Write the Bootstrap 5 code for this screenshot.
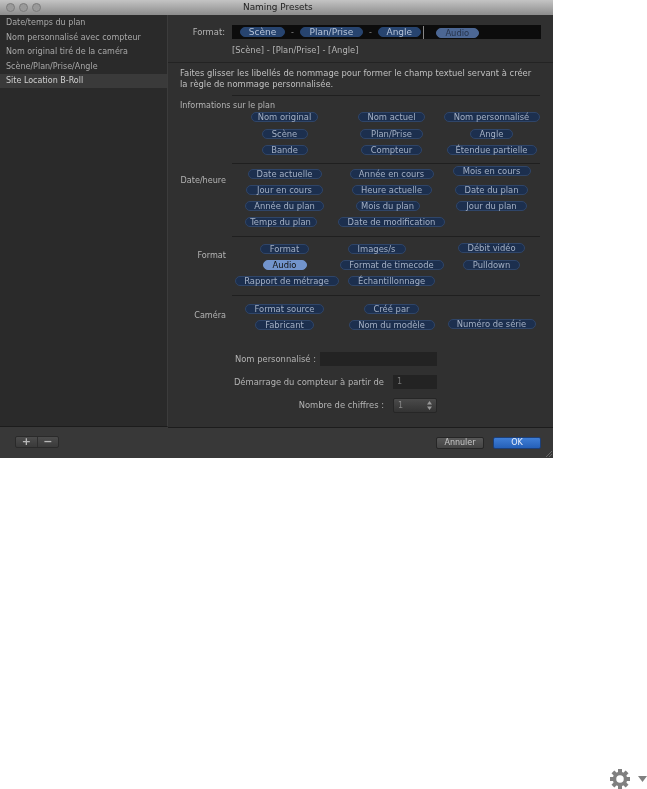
<!DOCTYPE html>
<html lang="fr">
<head>
<meta charset="utf-8">
<title>Naming Presets</title>
<link rel="stylesheet" href="https://cdn.jsdelivr.net/npm/bootstrap@5.3.0/dist/css/bootstrap.min.css">
<style>
html,body{height:100%}
body{background:#fff;font-family:"DejaVu Sans","Liberation Sans",sans-serif;font-size:8px;line-height:11px;color:#b4b4b4;overflow:hidden}
.np-window{width:553px;height:458px;background:#383838;flex:none;filter:blur(.3px)}
.np-title{height:15px;background:linear-gradient(#c4c4c4,#8c8c8c);color:#222;font-size:8.9px;line-height:15px;padding-left:6px}
.np-light{width:9px;height:9px;border-radius:50%;background:#9a9a9a;border:1px solid #7b7b7b}
.np-titletext{margin-left:198px}
.np-body{height:413px}
.np-side{width:168px;background:#2a2a2a;border-right:1px solid #3c3c3c;padding-top:1px;height:412px;border-bottom:1px solid #1c1c1c}
.np-side .list-group-item{background:transparent;border:0;border-radius:0;color:#a8a8a8;font-size:8px;line-height:14.7px;height:14.7px;padding:0 0 0 6px}
.np-side .list-group-item.active{background:#3a3a3a;color:#d0d0d0}
.np-main{width:385px;background:#303030;height:413px;border-bottom:1px solid #1c1c1c}
.np-head{height:48px;border-bottom:1px solid #232323;padding-top:10px}
.np-flabel{width:57px;text-align:right;line-height:14px;font-size:8.4px}
.np-field{width:309px;height:14px;background:#0c0c0c;margin-left:7px;padding-left:8px;align-items:center;gap:6px;color:#8a8a8a}
.np-caret{width:1px;height:13px;background:#888;margin-left:-4px}
.np-chip{display:inline-block;height:10px;line-height:8.500px;border-radius:5px;background:#1c2f4e;border:1px solid #2f4568;color:#a4b0c4;white-space:nowrap;justify-self:center;text-align:center;font-size:8.4px}
.np-field .np-chip{background:#27446f;color:#b6c4da;border-color:#27446f;font-size:9px}
.np-field .np-ghost{background:#4c6794;border-color:#4c6794;color:#26334a;margin:2px 0 0 6px;font-size:8.4px}
.np-chip.np-on{background:#7294cc;border-color:#7294cc;color:#101010}
.np-preview{margin:6px 0 0 64px;line-height:11px;font-size:8.4px}
.np-para{padding:5px 0 0 12px;line-height:11px;height:32px;color:#c0c0c0;font-size:8.4px}
.np-rule{height:1px;background:#1f1f1f;margin-left:64px;width:308px}
.np-infolabel{margin:5px 0 0 12px;line-height:10px;height:10px}
.np-grid{display:grid;grid-template-columns:107px 107px 93px;grid-auto-rows:16px;align-items:start;margin-left:63px}
.np-sec{display:flex}
.np-seclabel{width:58px;text-align:right;margin:6px 6px 0 0;line-height:10px;flex:none;font-size:8.1px}
.np-sec .np-grid{margin-left:-1px}
.d1{margin-top:1px}.u1{margin-top:-1px}.u3{margin-top:-3px}
.ml4{margin-right:8px}.ml30{margin-right:30px}.mr3{margin-left:4px}
.gap-a{margin-top:1px}.gap-b{margin-top:3px}.gap-c{margin-top:5px}.gap-d{margin-top:3px}.gap-e{margin-top:7px}.gap-f{margin-top:3px}.gap-g{margin-top:8px}
.cw43{width:43px}.cw44{width:44px}.cw45{width:45px}.cw46{width:46px}.cw49{width:49px}.cw55{width:55px}.cw57{width:57px}.cw58{width:58px}.cw59{width:59px}.cw61{width:61px}.cw63{width:63px}.cw64{width:64px}.cw67{width:67px}.cw71{width:71px}.cw72{width:72px}.cw73{width:73px}.cw74{width:74px}.cw77{width:77px}.cw78{width:78px}.cw79{width:79px}.cw80{width:80px}.cw84{width:84px}.cw86{width:86px}.cw87{width:87px}.cw88{width:88px}.cw90{width:90px}.cw96{width:96px}.cw104{width:104px}.cw107{width:107px}
.np-fields{margin-top:16px}
.np-frow{height:14px;margin-bottom:9px;align-items:center}
.np-frow label{width:148px;text-align:right;margin:0;flex:none;white-space:nowrap;font-size:8.4px}
.np-input{background:#232323;border:0;border-radius:0;height:14px;padding:0 0 0 4px;font-size:8px;color:#777;min-height:0;line-height:14px}
.np-input:focus{background:#232323;box-shadow:none;color:#777}
.np-w1{width:117px;margin-left:4px}
.np-w2{width:44px;margin-left:9px}
.np-frow .np-lw2{width:216px}
.np-stepper{width:44px;height:15px;margin-left:9px;background:linear-gradient(#4a4a4a,#333);border:1px solid #262626;border-radius:2px;padding:0 4px;color:#888;line-height:13px}
.np-foot{height:30px;padding:8px 12px 0 15px;position:relative}
.np-seg{width:44px;height:12px;background:linear-gradient(#4c4c4c,#3a3a3a);border:1px solid #2a2a2a;border-radius:2px}
.np-seg span{flex:1;text-align:center;color:#b8b8b8;font-size:11px;line-height:10px;font-weight:700}
.np-seg span+span{border-left:1px solid #2e2e2e}
.np-btn{height:12px;width:48px;padding:0;font-size:8px;line-height:10px;border-radius:2px;margin-top:1px}
.np-cancel{background:linear-gradient(#585858,#444);border:1px solid #262626;color:#c8c8c8}
.np-ok{background:linear-gradient(#3f7ed6,#2560b8);border:1px solid #1c3f78;color:#e8eefa;margin-left:9px}
.np-grip{position:absolute;right:1px;bottom:1px}
.np-gear{height:20px;gap:8px;align-items:center;flex:none}
</style>
</head>
<body class="d-flex flex-column">
<div class="np-window">
  <div class="np-title d-flex align-items-center gap-1">
    <span class="np-light"></span><span class="np-light"></span><span class="np-light"></span>
    <span class="np-titletext">Naming Presets</span>
  </div>
  <div class="np-body d-flex">
    <div class="np-side">
      <div class="list-group">
        <div class="list-group-item">Date/temps du plan</div>
        <div class="list-group-item">Nom personnalisé avec compteur</div>
        <div class="list-group-item">Nom original tiré de la caméra</div>
        <div class="list-group-item">Scène/Plan/Prise/Angle</div>
        <div class="list-group-item active">Site Location B-Roll</div>
      </div>
    </div>
    <div class="np-main">
      <div class="np-head">
        <div class="d-flex">
          <div class="np-flabel">Format:</div>
          <div class="np-field d-flex">
            <span class="np-chip cw45">Scène</span><span>-</span><span class="np-chip cw63">Plan/Prise</span><span>-</span><span class="np-chip cw43">Angle</span><span class="np-caret"></span><span class="np-chip np-ghost cw43">Audio</span>
          </div>
        </div>
        <div class="np-preview">[Scène] - [Plan/Prise] - [Angle]</div>
      </div>
      <div class="np-para">Faites glisser les libellés de nommage pour former le champ textuel servant à créer<br>la règle de nommage personnalisée.</div>
      <div class="np-rule"></div>
      <div class="np-infolabel">Informations sur le plan</div>
      <div class="np-grid gap-a">
        <span class="np-chip cw67">Nom original</span><span class="np-chip cw67">Nom actuel</span><span class="np-chip cw96">Nom personnalisé</span>
        <span class="np-chip d1 cw46">Scène</span><span class="np-chip d1 cw63">Plan/Prise</span><span class="np-chip d1 cw43">Angle</span>
        <span class="np-chip d1 cw46">Bande</span><span class="np-chip d1 cw61">Compteur</span><span class="np-chip d1 cw90">Étendue partielle</span>
      </div>
      <div class="np-rule gap-b"></div>
      <div class="np-sec gap-c">
        <div class="np-seclabel">Date/heure</div>
        <div class="np-grid">
          <span class="np-chip cw74">Date actuelle</span><span class="np-chip cw84">Année en cours</span><span class="np-chip u3 cw78">Mois en cours</span>
          <span class="np-chip cw77">Jour en cours</span><span class="np-chip cw80">Heure actuelle</span><span class="np-chip cw73">Date du plan</span>
          <span class="np-chip cw79">Année du plan</span><span class="np-chip cw64 ml4">Mois du plan</span><span class="np-chip cw71">Jour du plan</span>
          <span class="np-chip cw72 ml4">Temps du plan</span><span class="np-chip cw107">Date de modification</span>
        </div>
      </div>
      <div class="np-rule gap-d"></div>
      <div class="np-sec gap-e">
        <div class="np-seclabel">Format</div>
        <div class="np-grid">
          <span class="np-chip cw49">Format</span><span class="np-chip cw58 ml30">Images/s</span><span class="np-chip u1 cw67">Débit vidéo</span>
          <span class="np-chip np-on cw44">Audio</span><span class="np-chip cw104">Format de timecode</span><span class="np-chip cw57">Pulldown</span>
          <span class="np-chip cw104 mr3">Rapport de métrage</span><span class="np-chip cw87">Échantillonnage</span>
        </div>
      </div>
      <div class="np-rule gap-f"></div>
      <div class="np-sec gap-g">
        <div class="np-seclabel">Caméra</div>
        <div class="np-grid">
          <span class="np-chip cw79">Format source</span><span class="np-chip cw55">Créé par</span><span></span>
          <span class="np-chip cw59">Fabricant</span><span class="np-chip cw86">Nom du modèle</span><span class="np-chip u1 cw88">Numéro de série</span>
        </div>
      </div>
      <div class="np-fields">
        <div class="np-frow d-flex"><label>Nom personnalisé :</label><input class="form-control np-input np-w1" type="text" value=""></div>
        <div class="np-frow d-flex"><label class="np-lw2">Démarrage du compteur à partir de</label><input class="form-control np-input np-w2" type="text" value="1"></div>
        <div class="np-frow d-flex"><label class="np-lw2">Nombre de chiffres :</label>
          <div class="np-stepper d-flex justify-content-between align-items-center"><span>1</span>
            <svg width="5" height="9" viewBox="0 0 5 9"><path d="M2.5 0 5 3.500H0zM2.500 9 0 5.500h5z" fill="#999"/></svg>
          </div>
        </div>
      </div>
    </div>
  </div>
  <div class="np-foot d-flex justify-content-between">
    <div class="np-seg d-flex"><span>+</span><span>−</span></div>
    <div class="d-flex">
      <button class="btn np-btn np-cancel" type="button">Annuler</button>
      <button class="btn np-btn np-ok" type="button">OK</button>
    </div>
    <svg class="np-grip" width="7" height="7" viewBox="0 0 7 7"><path d="M7 1 1 7M7 4 4 7" stroke="#666" fill="none"/></svg>
  </div>
</div>
<div class="np-gear d-flex justify-content-end mt-auto">
  <svg width="20" height="20" viewBox="0 0 20 20" fill="#808080">
    <circle cx="10" cy="10" r="5.500" fill="none" stroke="#808080" stroke-width="3.500"/>
    <rect x="8" y="0" width="4" height="5"/><rect x="8" y="15" width="4" height="5"/>
    <rect x="0" y="8" width="5" height="4"/><rect x="15" y="8" width="5" height="4"/>
    <g transform="rotate(45 10 10)"><rect x="8" y="0" width="4" height="5"/><rect x="8" y="15" width="4" height="5"/><rect x="0" y="8" width="5" height="4"/><rect x="15" y="8" width="5" height="4"/></g>
  </svg>
  <svg width="9" height="6" viewBox="0 0 9 6"><path d="M0 0h9L4.500 6z" fill="#808080"/></svg>
</div>
</body>
</html>
